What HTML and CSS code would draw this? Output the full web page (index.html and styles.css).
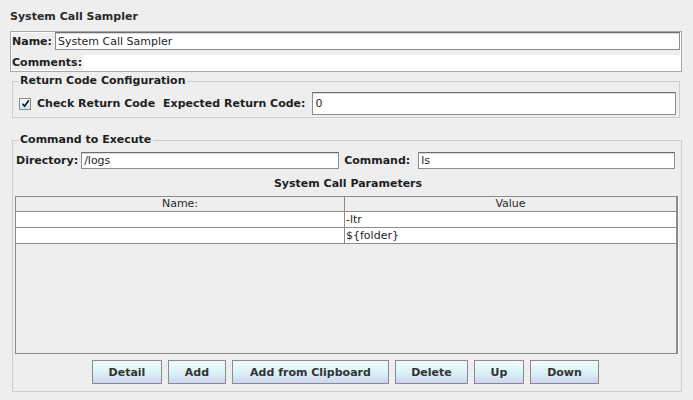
FILE: index.html
```html
<!DOCTYPE html>
<html>
<head>
<meta charset="utf-8">
<link rel="stylesheet" href="styles.css">
</head>
<body>
<div class="page">
  <div class="title">System Call Sampler</div>
  <div class="namebox">
    <div class="row name-row">
      <span class="lbl">Name:</span>
      <div class="field name-field">System Call Sampler</div>
    </div>
    <div class="row comments-row">
      <span class="lbl">Comments:</span>
      <div class="comments-area"></div>
    </div>
  </div>

  <fieldset class="group rc-group">
    <legend>Return Code Configuration</legend>
    <div class="row rc-row">
      <span class="checkbox"><svg width="9" height="9" viewBox="0 0 9 9"><path d="M1.5 4.8 L3.6 7.2 L7.8 1.2" fill="none" stroke="#1a1a1a" stroke-width="1.7"/></svg></span>
      <span class="lbl cb-lbl">Check Return Code</span>
      <span class="lbl exp-lbl">Expected Return Code:</span>
      <div class="field rc-field">0</div>
    </div>
  </fieldset>

  <fieldset class="group cmd-group">
    <legend>Command to Execute</legend>
    <div class="row dir-row">
      <span class="lbl dir-lbl">Directory:</span>
      <div class="field dir-field">/logs</div>
      <span class="lbl cmd-lbl">Command:</span>
      <div class="field cmd-field">ls</div>
    </div>
    <div class="params-title">System Call Parameters</div>
    <div class="table">
      <div class="thead">
        <div class="th">Name:</div>
        <div class="th th-last">Value</div>
      </div>
      <div class="tr">
        <div class="td"></div>
        <div class="td">-ltr</div>
      </div>
      <div class="tr">
        <div class="td"></div>
        <div class="td">${folder}</div>
      </div>
    </div>
    <div class="buttons">
      <button class="btn btn-detail">Detail</button>
      <button class="btn btn-add">Add</button>
      <button class="btn btn-clip">Add from Clipboard</button>
      <button class="btn btn-delete">Delete</button>
      <button class="btn btn-up">Up</button>
      <button class="btn btn-down">Down</button>
    </div>
  </fieldset>
</div>
</body>
</html>
```
FILE: styles.css
```css
html, body {
  margin: 0;
  padding: 0;
  background: #eeeeee;
}
body {
  font-family: "DejaVu Sans", "Liberation Sans", sans-serif;
  font-size: 11px;
  color: #1e1e1e;
  width: 693px;
  height: 400px;
  overflow: hidden;
}
.page {
  padding: 0 11px 0 10px;
}
.title {
  font-weight: bold;
  color: #2a2a2a;
  height: 14px;
  line-height: 14px;
  padding-top: 10px;
  padding-left: 0;
  margin-bottom: 7px;
}
.namebox {
  border: 1px solid #a8a8a8;
  box-shadow: inset 0 0 0 1px #ffffff;
  height: 39px;
  display: flex;
  flex-direction: column;
}
.row {
  display: flex;
  align-items: center;
}
.lbl {
  font-weight: bold;
  white-space: nowrap;
}
.name-row {
  height: 18px;
  padding-left: 1px;
  padding-right: 1px;
}
.field {
  background: #ffffff;
  border: 1px solid #8c8c8c;
  border-top-color: #6e6e6e;
  box-shadow: inset 0 1px 0 #d8d8d8;
  box-sizing: border-box;
  padding-left: 2px;
  white-space: nowrap;
  display: flex;
  align-items: center;
}
.name-field {
  flex: 1;
  height: 18px;
  margin-left: 3px;
}
.comments-row {
  height: 21px;
  padding-left: 1px;
  align-items: flex-end;
}
.comments-row .lbl {
  line-height: 16px;
}
.comments-area {
  flex: 1;
  height: 16px;
  background: #ffffff;
  margin-left: 1px;
}
.group {
  border: 1px solid #cccccc;
  margin: 0 0 0 2px;
  width: 668px;
  box-sizing: border-box;
  padding: 0 3px 0 2px;
}
.group legend {
  font-weight: bold;
  padding: 0 2px 0 1px;
  margin-left: 4px;
  line-height: 14px;
  color: #1e1e1e;
}
.rc-group {
  margin-top: 2px;
  height: 44px;
}
.rc-row {
  height: 23px;
  margin-top: 4px;
  padding-left: 1px;
}
.checkbox {
  width: 10px;
  height: 10px;
  border: 1px solid #8a8a8a;
  background: linear-gradient(#f4fcff, #cfe4f4);
  display: inline-flex;
  align-items: center;
  justify-content: center;
  margin-left: 3px;
  margin-right: 6px;
}
.exp-lbl {
  margin-left: 8px;
}
.rc-field {
  width: 364px;
  height: 23px;
  margin-left: 7px;
}
.cmd-group {
  margin-top: 15px;
  height: 259px;
}
.dir-row {
  height: 17px;
  margin-top: 5px;
  padding-left: 1px;
}
.dir-field {
  width: 258px;
  height: 17px;
  margin-left: 3px;
}
.cmd-lbl {
  margin-left: 5px;
}
.cmd-field {
  width: 257px;
  height: 17px;
  margin-left: 8px;
}
.params-title {
  font-weight: bold;
  text-align: center;
  height: 14px;
  line-height: 14px;
  margin-top: 8px;
  margin-bottom: 5px;
  padding-left: 3px;
}
.table {
  width: 663px;
  height: 158px;
  box-sizing: border-box;
  border: 1px solid #8c8c8c;
  border-right: 2px solid #8c8c8c;
  background: #eeeeee;
}
.thead, .tr {
  display: grid;
  grid-template-columns: 329px 1fr;
  border-bottom: 1px solid #8c8c8c;
}
.thead {
  height: 14px;
}
.tr {
  height: 15px;
  background: #ffffff;
}
.th {
  text-align: center;
  line-height: 14px;
  color: #2a2a2a;
  border-right: 1px solid #8c8c8c;
}
.th-last {
  border-right: none;
}
.td {
  line-height: 15px;
  padding-left: 1px;
  border-right: 1px solid #8c8c8c;
}
.td:last-child {
  border-right: none;
}
.buttons {
  display: flex;
  justify-content: flex-start;
  gap: 6px;
  margin-top: 6px;
  padding-left: 77px;
}
.btn {
  font-family: inherit;
  font-size: 11px;
  font-weight: bold;
  color: #333333;
  height: 24px;
  border: 1px solid #8a8a8a;
  background: linear-gradient(#f2fbfb 0%, #e2f6f8 35%, #d8eef6 60%, #cfd2f2 100%);
  padding: 0;
  margin: 0;
  box-sizing: border-box;
}
.btn-detail { width: 70px; }
.btn-add { width: 58px; }
.btn-clip { width: 157px; }
.btn-delete { width: 73px; }
.btn-up { width: 50px; }
.btn-down { width: 69px; }
```
